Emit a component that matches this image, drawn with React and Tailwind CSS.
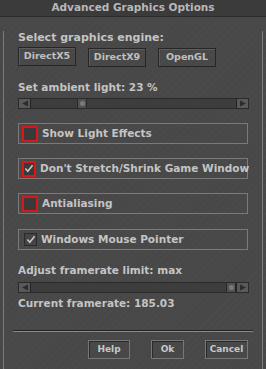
import React from 'react';

const font = { fontFamily: '"DejaVu Sans", Verdana, sans-serif' };

const Check = () => (
  <svg width="10" height="9" viewBox="0 0 11 10">
    <path d="M1.5 5 L4.2 8 L9.5 1.5" fill="none" stroke="#c8c8c8" strokeWidth="1.8" />
  </svg>
);

const CheckRow = ({ label, checked, red }) => (
  <div className="flex items-center h-[21px] border border-[#7a7a7a] pl-[3px]">
    {red ? (
      <div className="w-[16px] h-[16px] border-2 border-[#d81818] bg-[#3a3a3a] flex items-center justify-center">
        {checked && <Check />}
      </div>
    ) : (
      <div className="ml-[2px] w-[13px] h-[13px] border border-[#2a2a2a] bg-[#444] flex items-center justify-center">
        {checked && <Check />}
      </div>
    )}
    <span className="ml-[4px] text-[10.5px] font-bold text-[#c4c4c4] whitespace-nowrap">{label}</span>
  </div>
);

const Slider = ({ pos }) => (
  <div className="flex h-[11px] w-[231px] bg-[#3d3d3d] border border-[#2a2a2a]">
    <div className="w-[12px] h-full bg-[#595959] border-r border-[#222] flex items-center justify-center">
      <svg width="8" height="7" viewBox="0 0 8 7"><path d="M1 3.5 L7 0.5 L7 6.5 Z" fill="#2c2c2c" /></svg>
    </div>
    <div className="flex-1 relative">
      <div className="absolute top-0 w-[10px] h-full bg-[#525252] border-x border-[#2a2a2a] flex items-center justify-center" style={{ left: pos }}>
        <div className="w-[5px] h-[5px] rounded-full bg-[#7a7a7a]" />
      </div>
    </div>
    <div className="w-[12px] h-full bg-[#595959] border-l border-[#222] flex items-center justify-center">
      <svg width="8" height="7" viewBox="0 0 8 7"><path d="M7 3.5 L1 0.5 L1 6.5 Z" fill="#2c2c2c" /></svg>
    </div>
  </div>
);

const EngineBtn = ({ children, extra }) => (
  <button className={"w-[58px] h-[19px] border border-[#262626] shadow-[inset_1px_1px_0_#5c5c5c] text-[9.5px] font-bold text-[#c0c0c0] " + (extra || "")}>
    {children}
  </button>
);

const FootBtn = ({ children, w }) => (
  <button className={"h-[19px] border border-[#777] shadow-[inset_1px_1px_0_#2a2a2a] text-[9px] font-bold text-[#c8c8c8] " + w}>
    {children}
  </button>
);

export default function App() {
  return (
    <div style={font} className="w-[266px] h-[369px] bg-[#484848] bg-[repeating-linear-gradient(135deg,#484848_0px,#484848_3px,#4c4c4c_4px,#454545_5px)] overflow-hidden">
      <div className="h-[17px] bg-[#3b3b3b] border-b border-[#2c2c2c] flex items-center justify-center">
        <span className="text-[10.5px] font-bold text-[#b8b8b8]">Advanced Graphics Options</span>
      </div>
      <div className="ml-[3px] w-[260px] h-[349px] border-l border-r border-b border-[#7c7c7c] px-[14px]">
        <div className="mt-[14px] h-[14px] leading-[14px] text-[11px] font-bold text-[#c4c4c4]">Select graphics engine:</div>
        <div className="mt-[2px] flex gap-[12px]">
          <EngineBtn>DirectX5</EngineBtn>
          <EngineBtn extra="mt-[1px]">DirectX9</EngineBtn>
          <EngineBtn extra="mt-[1px]">OpenGL</EngineBtn>
        </div>
        <div className="mt-[13px] h-[14px] leading-[14px] text-[10.5px] font-bold text-[#c4c4c4]">Set ambient light: 23 %</div>
        <div className="mt-[4px]"><Slider pos={46} /></div>
        <div className="mt-[14px]"><CheckRow label="Show Light Effects" red /></div>
        <div className="mt-[14px]"><CheckRow label="Don't Stretch/Shrink Game Window" red checked /></div>
        <div className="mt-[14px]"><CheckRow label="Antialiasing" red /></div>
        <div className="mt-[15px]"><CheckRow label="Windows Mouse Pointer" checked /></div>
        <div className="mt-[13px] h-[14px] leading-[14px] text-[10.5px] font-bold text-[#c4c4c4]">Adjust framerate limit: max</div>
        <div className="mt-[5px]"><Slider pos={195} /></div>
        <div className="mt-[3px] h-[14px] leading-[14px] text-[10.5px] font-bold text-[#c4c4c4]">Current framerate: 185.03</div>
        <div className="mt-[20px] -mx-[5px] h-[2px] border-t border-[#222] border-b border-b-[#8a8a8a]" />
        <div className="mt-[8px] flex justify-end gap-[21px]">
          <FootBtn w="w-[42px]">Help</FootBtn>
          <FootBtn w="w-[33px]">Ok</FootBtn>
          <FootBtn w="w-[43px]">Cancel</FootBtn>
        </div>
      </div>
    </div>
  );
}
